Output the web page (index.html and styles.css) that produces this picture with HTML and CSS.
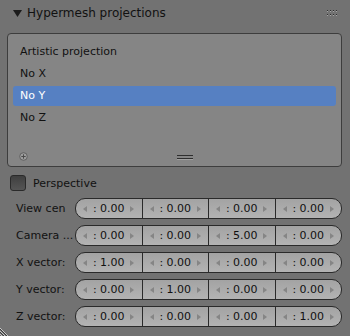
FILE: index.html
```html
<!DOCTYPE html>
<html lang="en">
<head>
    <meta charset="UTF-8">
    <title>Hypermesh projections</title>
    <link rel="stylesheet" href="styles.css">
</head>
<body>
<div class="panel">

    <!-- Panel header -->
    <div class="panel-header">
        <svg class="arrow-down" width="9" height="9" viewBox="0 0 9 9"><path d="M0 1 L9 1 L4.5 8 Z" fill="#1b1b1b"/></svg>
        <span class="panel-title">Hypermesh projections</span>
        <svg class="drag-dots" width="12" height="7" viewBox="0 0 12 7">
            <g fill="#2e2e2e">
                <rect x="1" y="0" width="1" height="1"/><rect x="4" y="0" width="1" height="1"/><rect x="7" y="0" width="1" height="1"/><rect x="10" y="0" width="1" height="1"/>
                <rect x="1" y="4" width="1" height="1"/><rect x="4" y="4" width="1" height="1"/><rect x="7" y="4" width="1" height="1"/><rect x="10" y="4" width="1" height="1"/>
            </g>
            <g fill="#a8a8a8">
                <rect x="1" y="1" width="1" height="1"/><rect x="4" y="1" width="1" height="1"/><rect x="7" y="1" width="1" height="1"/><rect x="10" y="1" width="1" height="1"/>
                <rect x="1" y="5" width="1" height="1"/><rect x="4" y="5" width="1" height="1"/><rect x="7" y="5" width="1" height="1"/><rect x="10" y="5" width="1" height="1"/>
            </g>
        </svg>
    </div>

    <!-- Projection list -->
    <div class="list-box">
        <div class="list-items">
            <div class="list-item">Artistic projection</div>
            <div class="list-item">No X</div>
            <div class="list-item active">No Y</div>
            <div class="list-item">No Z</div>
        </div>
        <div class="list-footer">
            <svg class="add-icon" width="9" height="9" viewBox="0 0 9 9">
                <circle cx="4.5" cy="4.5" r="3.8" fill="#9c9c9c" stroke="#5c5c5c" stroke-width="0.9"/>
                <path d="M4.5 2.3 V6.7 M2.3 4.5 H6.7" stroke="#4a4a4a" stroke-width="1"/>
            </svg>
            <div class="list-grip"></div>
        </div>
    </div>

    <!-- Checkbox -->
    <div class="check-row">
        <span class="checkbox"></span>
        <span class="check-label">Perspective</span>
    </div>

    <!-- Vector rows -->
    <div class="vec-row">
        <span class="vec-label">View cen</span>
        <div class="vec-field">
            <div class="num"><i class="tri-l"></i><span>: 0.00</span><i class="tri-r"></i></div>
            <div class="num"><i class="tri-l"></i><span>: 0.00</span><i class="tri-r"></i></div>
            <div class="num"><i class="tri-l"></i><span>: 0.00</span><i class="tri-r"></i></div>
            <div class="num"><i class="tri-l"></i><span>: 0.00</span><i class="tri-r"></i></div>
        </div>
    </div>
    <div class="vec-row">
        <span class="vec-label">Camera ...</span>
        <div class="vec-field">
            <div class="num"><i class="tri-l"></i><span>: 0.00</span><i class="tri-r"></i></div>
            <div class="num"><i class="tri-l"></i><span>: 0.00</span><i class="tri-r"></i></div>
            <div class="num"><i class="tri-l"></i><span>: 5.00</span><i class="tri-r"></i></div>
            <div class="num"><i class="tri-l"></i><span>: 0.00</span><i class="tri-r"></i></div>
        </div>
    </div>
    <div class="vec-row">
        <span class="vec-label">X vector:</span>
        <div class="vec-field">
            <div class="num"><i class="tri-l"></i><span>: 1.00</span><i class="tri-r"></i></div>
            <div class="num"><i class="tri-l"></i><span>: 0.00</span><i class="tri-r"></i></div>
            <div class="num"><i class="tri-l"></i><span>: 0.00</span><i class="tri-r"></i></div>
            <div class="num"><i class="tri-l"></i><span>: 0.00</span><i class="tri-r"></i></div>
        </div>
    </div>
    <div class="vec-row">
        <span class="vec-label">Y vector:</span>
        <div class="vec-field">
            <div class="num"><i class="tri-l"></i><span>: 0.00</span><i class="tri-r"></i></div>
            <div class="num"><i class="tri-l"></i><span>: 1.00</span><i class="tri-r"></i></div>
            <div class="num"><i class="tri-l"></i><span>: 0.00</span><i class="tri-r"></i></div>
            <div class="num"><i class="tri-l"></i><span>: 0.00</span><i class="tri-r"></i></div>
        </div>
    </div>
    <div class="vec-row">
        <span class="vec-label">Z vector:</span>
        <div class="vec-field">
            <div class="num"><i class="tri-l"></i><span>: 0.00</span><i class="tri-r"></i></div>
            <div class="num"><i class="tri-l"></i><span>: 0.00</span><i class="tri-r"></i></div>
            <div class="num"><i class="tri-l"></i><span>: 0.00</span><i class="tri-r"></i></div>
            <div class="num"><i class="tri-l"></i><span>: 1.00</span><i class="tri-r"></i></div>
        </div>
    </div>

    <!-- Resize corner -->
    <svg class="resize-corner" width="11" height="11" viewBox="0 0 11 11">
        <path d="M0 3 L8 11 M0 6 L5 11 M0 9 L2 11" stroke="#c8c8c8" stroke-width="1"/>
        <path d="M0 4 L7 11 M0 7 L4 11" stroke="#3a3a3a" stroke-width="1"/>
    </svg>
</div>
</body>
</html>
```

FILE: styles.css
```css
body {
    margin: 0;
    background-color: #727272;
    font-family: "DejaVu Sans", sans-serif;
    font-size: 11px;
    color: #111;
}

.panel {
    position: relative;
    width: 350px;
    height: 336px;
    background-color: #727272;
    overflow: hidden;
}

.panel-header {
    display: flex;
    align-items: center;
    height: 25px;
    padding: 0 12px 0 13px;
    margin-bottom: 8px;
}

.arrow-down {
    margin-top: 1px;
}

.panel-title {
    margin-left: 5px;
    font-size: 12px;
    flex: 1;
    color: #111;
}

.drag-dots {
    margin-top: 2px;
}

/* list box */
.list-box {
    margin: 0 8px 0 7px;
    height: 132px;
    background-color: #858585;
    border: 1px solid #3d3d3d;
    border-radius: 4px;
    display: flex;
    flex-direction: column;
}

.list-items {
    padding: 8px 5px 0 5px;
}

.list-item {
    height: 20px;
    line-height: 20px;
    margin-bottom: 2px;
    padding-left: 7px;
    border-radius: 3px;
}

.list-item.active {
    background-color: #5680c2;
    color: #fff;
}

.list-footer {
    flex: 1;
    display: flex;
    align-items: flex-end;
    padding: 0 0 5px 11px;
}

.add-icon {
    display: block;
}

.list-grip {
    margin: 0 0 2px 149px;
    width: 16px;
    height: 2px;
    border-top: 1px solid #2e2e2e;
    border-bottom: 1px solid #2e2e2e;
    box-shadow: 0 1px 0 #a0a0a0;
}

/* checkbox row */
.check-row {
    display: flex;
    align-items: center;
    height: 16px;
    margin: 8px 0 0 10px;
}

.checkbox {
    width: 14px;
    height: 14px;
    background: linear-gradient(#3f3f3f, #555);
    border: 1px solid #2a2a2a;
    border-radius: 3px;
}

.check-label {
    margin-left: 7px;
    font-size: 11px;
}

/* vector rows */
.vec-row {
    display: flex;
    align-items: center;
    height: 21px;
    margin: 7px 8px 0 16px;
}

.vec-row + .vec-row {
    margin-top: 6px;
}

.vec-label {
    width: 59px;
    flex: none;
    white-space: nowrap;
}

.vec-field {
    flex: 1;
    display: flex;
    height: 19px;
    border: 1px solid #2a2a2a;
    border-radius: 10px;
    background: linear-gradient(#a3a3a3, #b3b3b3);
    overflow: hidden;
}

.num {
    flex: 1;
    display: flex;
    align-items: center;
    justify-content: space-between;
    padding: 0 7px 0 7px;
    border-left: 1px solid #2a2a2a;
}

.num:first-child {
    border-left: none;
}

.num span {
    color: #111;
}

.tri-l,
.tri-r {
    width: 0;
    height: 0;
    border-top: 3px solid transparent;
    border-bottom: 3px solid transparent;
}

.tri-l {
    border-right: 4px solid #858585;
}

.tri-r {
    border-left: 4px solid #858585;
}

.resize-corner {
    position: absolute;
    left: 0;
    bottom: 0;
}
```
